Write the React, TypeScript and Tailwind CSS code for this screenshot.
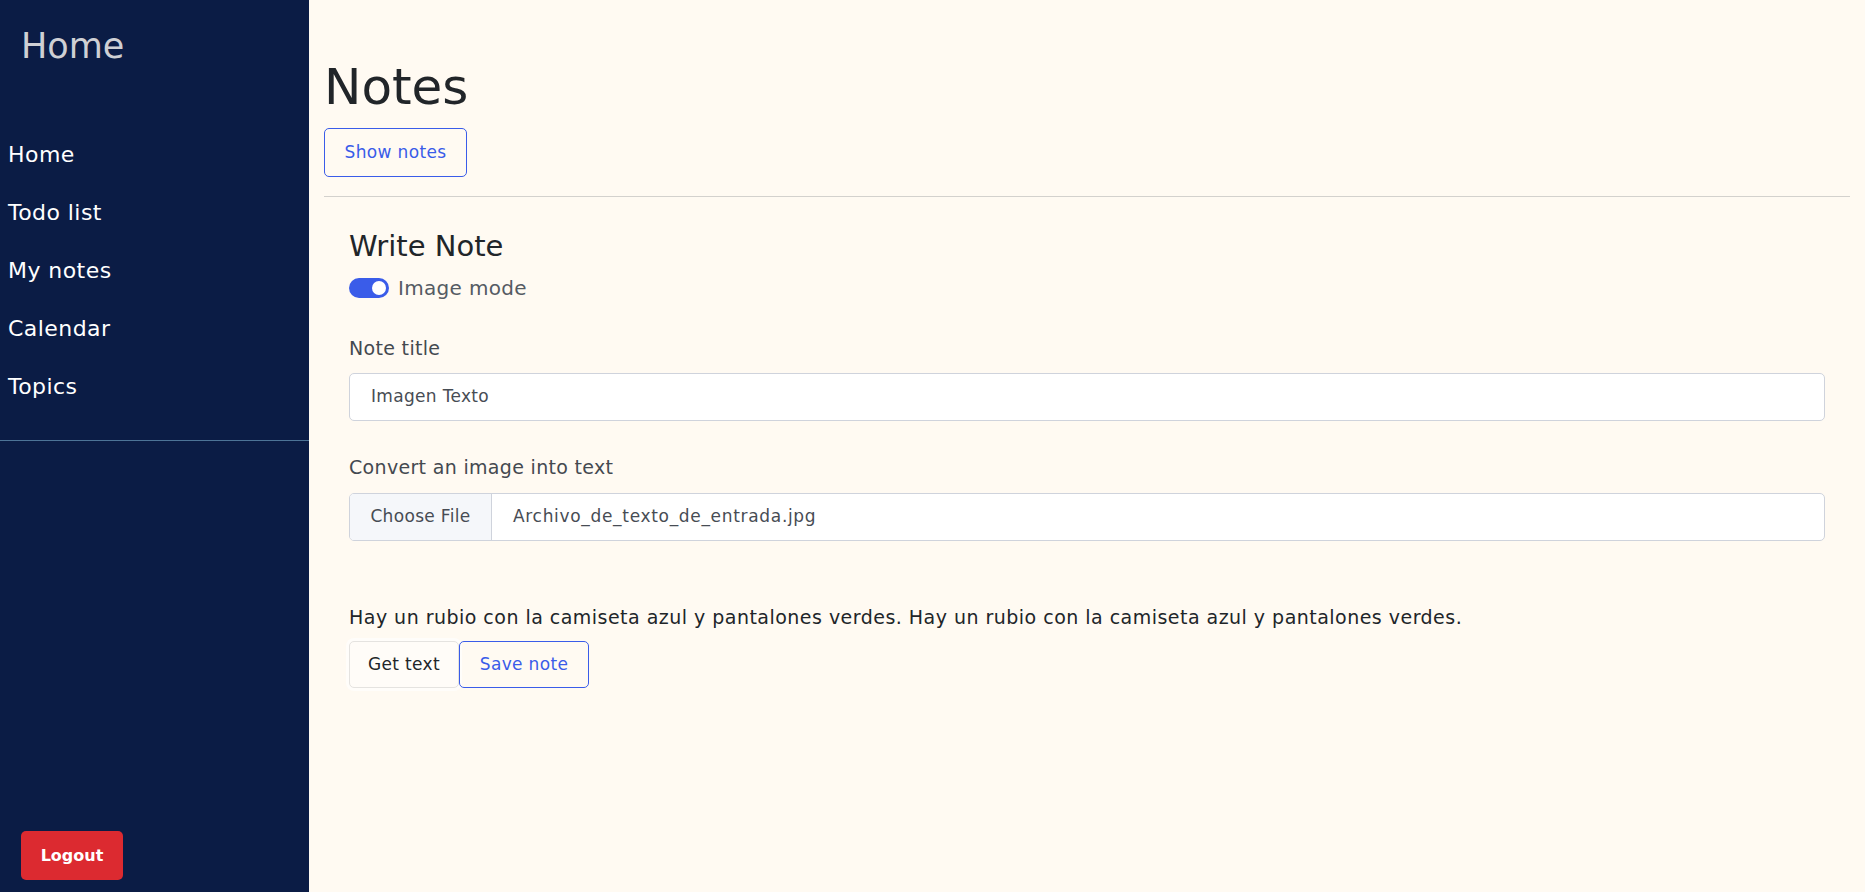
const navItems = ['Home', 'Todo list', 'My notes', 'Calendar', 'Topics'];

function Sidebar() {
  return (
    <aside className="flex h-full w-[309px] shrink-0 flex-col bg-[#0b1c45]">
      <div className="pl-[21px] pt-[18px] text-[35px] leading-[56px] text-[#cfd0d4]">Home</div>
      <nav className="flex flex-col gap-[22px] pl-[8px] pt-[63px] pb-[35px]">
        {navItems.map((item) => (
          <a key={item} className="text-[22px] leading-[36px] tracking-[0.02em] text-white">
            {item}
          </a>
        ))}
      </nav>
      <div className="border-t border-[#4d7497]" />
      <div className="flex-1" />
      <div className="pb-[12px] pl-[21px]">
        <button className="h-[49px] w-[102px] rounded-[5px] bg-[#dc2a30] text-[16px] font-semibold text-white">
          Logout
        </button>
      </div>
    </aside>
  );
}

function Toggle() {
  return (
    <span className="relative inline-block h-[20px] w-[40px] shrink-0 rounded-full bg-[#3a5ce9]">
      <span className="absolute right-[3px] top-[3px] h-[14px] w-[14px] rounded-full bg-white" />
    </span>
  );
}

export default function App() {
  return (
    <div
      className="flex h-[892px] w-full overflow-hidden"
      style={{ fontFamily: '"DejaVu Sans", "Noto Sans", sans-serif' }}
    >
      <Sidebar />
      <main className="flex-1 bg-[#fffaf2] px-[15px]">
        <h1 className="pt-[52px] text-[50px] leading-[70px] text-[#212529]">Notes</h1>
        <button className="mt-[6px] h-[49px] w-[143px] rounded-[5px] border border-[#3a5ce9] text-[17px] tracking-[0.02em] text-[#3a5ce9]">
          Show notes
        </button>
        <hr className="mt-[19px] border-t border-[#d3d1cd]" />
        <section className="px-[25px] pt-[31px] tracking-[0.02em]">
          <h2 className="text-[29px] leading-[36px] tracking-normal text-[#212529]">Write Note</h2>
          <label className="mt-[9px] flex items-center gap-[9px] text-[20px] text-[#555b63]">
            <Toggle />
            Image mode
          </label>
          <div className="mt-[31px] text-[19px] font-medium leading-[28px] text-[#444950]">Note title</div>
          <div className="mt-[11px] flex h-[48px] items-center rounded-[5px] border border-[#cfd3dc] bg-white pl-[21px] text-[17px] text-[#474c54]">
            Imagen Texto
          </div>
          <div className="mt-[32px] text-[19px] font-medium leading-[28px] text-[#444950]">
            Convert an image into text
          </div>
          <div className="mt-[12px] flex h-[48px] items-center overflow-hidden rounded-[5px] border border-[#cfd3dc] bg-white text-[17px] text-[#474c54]">
            <span className="flex h-full w-[142px] shrink-0 items-center justify-center border-r border-[#cfd3dc] bg-[#f5f7fa]">
              Choose File
            </span>
            <span className="pl-[21px] tracking-[0.04em]">Archivo_de_texto_de_entrada.jpg</span>
          </div>
          <p className="mt-[62px] text-[19px] leading-[28px] tracking-[0.025em] text-[#212529]">
            Hay un rubio con la camiseta azul y pantalones verdes. Hay un rubio con la camiseta azul y pantalones verdes.
          </p>
          <div className="mt-[10px] flex">
            <button className="h-[47px] w-[110px] rounded-[5px] border border-[#e5e3e0] bg-[#fffcf8] text-[17px] text-[#212529] shadow-[0_0_0_3px_rgba(255,255,255,0.6)]">
              Get text
            </button>
            <button className="h-[47px] w-[130px] rounded-[5px] border border-[#3a5ce9] text-[17px] text-[#3a5ce9]">
              Save note
            </button>
          </div>
        </section>
      </main>
    </div>
  );
}
